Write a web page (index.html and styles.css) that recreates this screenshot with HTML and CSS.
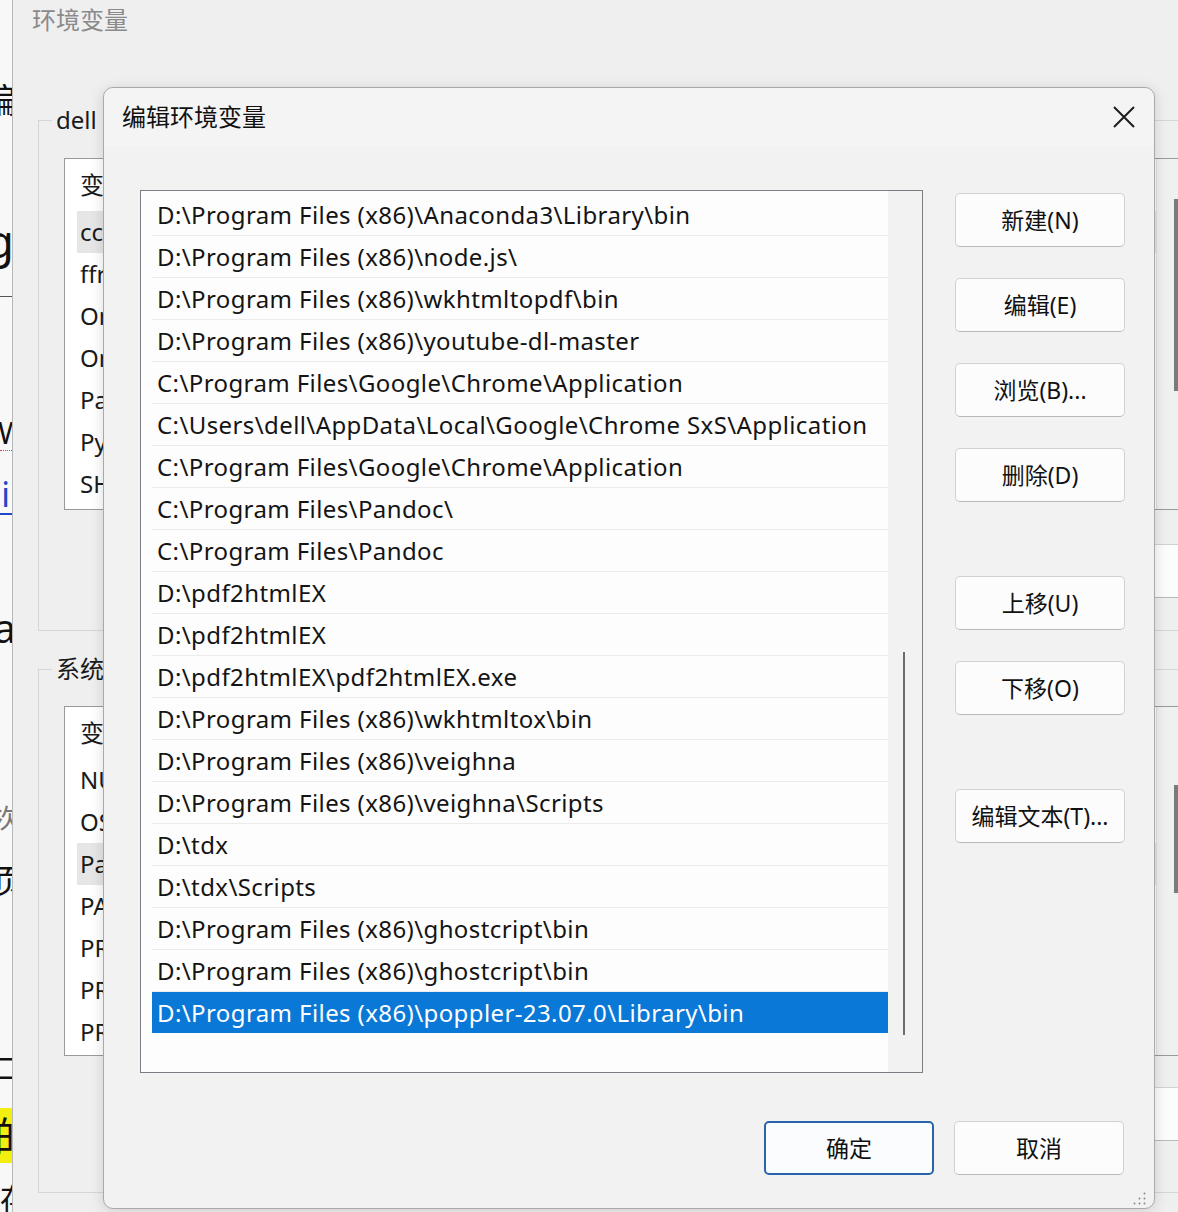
FILE: index.html
```html
<!DOCTYPE html>
<html lang="zh-CN">
<head>
  <meta charset="UTF-8">
  <title>编辑环境变量</title>
  <link rel="stylesheet" href="styles.css">
</head>
<body>
  <div class="doc">
    <div class="frag f-bian"><span>编</span></div>
    <div class="frag f-g"><span>g</span></div>
    <div class="doc-rule"></div>
    <div class="frag f-w"><span>W</span></div>
    <div class="frag f-i"><span>i</span></div>
    <div class="frag f-a"><span>a</span></div>
    <div class="frag f-ci"><span>次</span></div>
    <div class="frag f-ye"><span>页</span></div>
    <div class="frag f-er"><span>二</span></div>
    <div class="frag f-de"><span>的</span></div>
    <div class="frag f-cun"><span>存</span></div>
  </div>

  <div class="env-window">
    <div class="env-title">环境变量</div>

    <fieldset class="group group-user">
      <legend>dell 的用户变量(U)</legend>
      <div class="var-list list-user">
        <div class="var-body">
          <div class="var-head">变量</div>
          <div class="var-row active">cc</div>
          <div class="var-row">ffrun</div>
          <div class="var-row">OneDrive</div>
          <div class="var-row">OneDriveConsumer</div>
          <div class="var-row">Path</div>
          <div class="var-row">PyCharm</div>
          <div class="var-row">SHELL</div>
        </div>
        <div class="var-scroll"><div class="var-thumb thumb-user"></div></div>
      </div>
      <div class="group-buttons">
        <button class="btn">新建(N)...</button>
        <button class="btn">编辑(E)...</button>
        <button class="btn">删除(D)</button>
      </div>
    </fieldset>

    <fieldset class="group group-sys">
      <legend>系统变量(S)</legend>
      <div class="var-list list-sys">
        <div class="var-body">
          <div class="var-head">变量</div>
          <div class="var-row">NUMBER_OF_PROCESSORS</div>
          <div class="var-row">OS</div>
          <div class="var-row active">Path</div>
          <div class="var-row">PATHEXT</div>
          <div class="var-row">PROCESSOR_ARCHITECTURE</div>
          <div class="var-row">PROCESSOR_IDENTIFIER</div>
          <div class="var-row">PROCESSOR_LEVEL</div>
        </div>
        <div class="var-scroll"><div class="var-thumb thumb-sys"></div></div>
      </div>
      <div class="group-buttons sys-buttons">
        <button class="btn">新建(W)...</button>
        <button class="btn">编辑(I)...</button>
        <button class="btn">删除(L)</button>
      </div>
    </fieldset>
  </div>

  <div class="dialog">
    <div class="titlebar">
      <span class="dialog-title">编辑环境变量</span>
      <svg class="close" width="22" height="22" viewBox="0 0 22 22">
        <path d="M1 1 L21 21 M21 1 L1 21" stroke="#1c1c1c" stroke-width="2" fill="none"/>
      </svg>
    </div>

    <div class="dialog-body">
      <div class="path-list">
        <div class="path-rows">
          <div class="path-row">D:\Program Files (x86)\Anaconda3\Library\bin</div>
          <div class="path-row">D:\Program Files (x86)\node.js\</div>
          <div class="path-row">D:\Program Files (x86)\wkhtmltopdf\bin</div>
          <div class="path-row">D:\Program Files (x86)\youtube-dl-master</div>
          <div class="path-row">C:\Program Files\Google\Chrome\Application</div>
          <div class="path-row">C:\Users\dell\AppData\Local\Google\Chrome SxS\Application</div>
          <div class="path-row">C:\Program Files\Google\Chrome\Application</div>
          <div class="path-row">C:\Program Files\Pandoc\</div>
          <div class="path-row">C:\Program Files\Pandoc</div>
          <div class="path-row">D:\pdf2htmlEX</div>
          <div class="path-row">D:\pdf2htmlEX</div>
          <div class="path-row">D:\pdf2htmlEX\pdf2htmlEX.exe</div>
          <div class="path-row">D:\Program Files (x86)\wkhtmltox\bin</div>
          <div class="path-row">D:\Program Files (x86)\veighna</div>
          <div class="path-row">D:\Program Files (x86)\veighna\Scripts</div>
          <div class="path-row">D:\tdx</div>
          <div class="path-row">D:\tdx\Scripts</div>
          <div class="path-row">D:\Program Files (x86)\ghostcript\bin</div>
          <div class="path-row">D:\Program Files (x86)\ghostcript\bin</div>
          <div class="path-row selected">D:\Program Files (x86)\poppler-23.07.0\Library\bin</div>
        </div>
        <div class="path-scroll"><div class="path-thumb"></div></div>
      </div>

      <div class="side-buttons">
        <button class="btn">新建(N)</button>
        <button class="btn">编辑(E)</button>
        <button class="btn">浏览(B)...</button>
        <button class="btn">删除(D)</button>
        <button class="btn spaced">上移(U)</button>
        <button class="btn">下移(O)</button>
        <button class="btn spaced">编辑文本(T)...</button>
      </div>
    </div>

    <div class="dialog-footer">
      <button class="btn btn-default">确定</button>
      <button class="btn">取消</button>
    </div>

    <svg class="grip" width="14" height="14" viewBox="0 0 14 14">
      <circle cx="11.5" cy="2.5" r="1" fill="#8a8a8a"/>
      <circle cx="6.5" cy="7.5" r="1" fill="#8a8a8a"/>
      <circle cx="11.5" cy="7.5" r="1" fill="#8a8a8a"/>
      <circle cx="1.5" cy="12.5" r="1" fill="#8a8a8a"/>
      <circle cx="6.5" cy="12.5" r="1" fill="#8a8a8a"/>
      <circle cx="11.5" cy="12.5" r="1" fill="#8a8a8a"/>
    </svg>
  </div>
</body>
</html>
```

FILE: styles.css
```css
body {
  margin: 0;
  width: 1178px;
  height: 1212px;
  overflow: hidden;
  position: relative;
  background: #efefef;
  font-family: "Noto Sans", "Noto Sans CJK SC", sans-serif;
  color: #1a1a1a;
}

/* document peeking out on the left */
.doc {
  position: absolute;
  left: 0;
  top: 0;
  width: 12px;
  height: 1212px;
  background: #f8f8f8;
  overflow: hidden;
}
.frag {
  display: flex;
  justify-content: flex-end;
  white-space: nowrap;
  color: #111;
}
.f-bian { margin-top: 80px; height: 40px; line-height: 40px; font-size: 34px; }
.f-bian span { margin-right: -4px; }
.f-g { margin-top: 95px; height: 50px; line-height: 50px; font-size: 46px; }
.f-g span { margin-right: -2px; }
.doc-rule { margin-top: 31px; border-top: 1px solid #555; }
.f-w { margin-top: 118px; height: 35px; line-height: 35px; font-size: 30px; border-bottom: 1px dotted #e04040; }
.f-w span { margin-right: -14px; }
.f-i { margin-top: 25px; height: 37px; line-height: 37px; font-size: 34px; color: #2047c8; border-bottom: 2px solid #2047c8; }
.f-i span { margin-right: 2px; }
.f-a { margin-top: 93px; height: 40px; line-height: 40px; font-size: 40px; }
.f-a span { margin-right: -4px; }
.f-ci { margin-top: 155px; height: 30px; line-height: 30px; font-size: 26px; color: #777; }
.f-ci span { margin-right: -8px; }
.f-ye { margin-top: 28px; height: 40px; line-height: 40px; font-size: 34px; }
.f-ye span { margin-right: -14px; }
.f-er { margin-top: 152px; height: 30px; line-height: 30px; font-size: 30px; }
.f-er span { margin-right: -10px; }
.f-de { margin-top: 25px; height: 55px; line-height: 55px; font-size: 40px; background: #f2ee10; }
.f-de span { margin-right: -22px; }
.f-cun { margin-top: 20px; height: 32px; line-height: 32px; font-size: 30px; }
.f-cun span { margin-right: -18px; }

/* environment variables window behind */
.env-window {
  position: absolute;
  left: 12px;
  top: 0;
  width: 1240px;
  height: 1212px;
  box-sizing: border-box;
  border-left: 1px solid #b8b8b8;
  background: #efefef;
}
.env-title {
  height: 40px;
  line-height: 40px;
  padding-left: 19px;
  font-size: 24px;
  color: #8a8a8a;
}
.group {
  box-sizing: border-box;
  width: 1190px;
  margin: 0 0 0 25px;
  padding: 0;
  border: 1px solid #d6d6d6;
}
.group legend {
  margin-left: 13px;
  padding: 0 4px;
  font-size: 24px;
  line-height: 30px;
}
.group-user { margin-top: 65px; height: 526px; }
.group-sys { margin-top: 23px; height: 539px; }

.var-list {
  display: flex;
  width: 1136px;
  margin-left: 25px;
  box-sizing: border-box;
  border: 1px solid #9a9a9a;
  background: #fff;
  font-size: 24px;
}
.list-user { margin-top: 23px; height: 352px; }
.list-sys { margin-top: 22px; height: 350px; }
.var-body {
  flex: 1;
}
.var-head {
  height: 52px;
  line-height: 52px;
  padding-left: 15px;
}
.var-row {
  height: 42px;
  line-height: 42px;
  margin-left: 12px;
  padding-left: 3px;
}
.var-row.active {
  background: #e6e6e6;
}
.var-scroll {
  width: 42px;
  background: #f0f0f0;
  border-left: 1px solid #e0e0e0;
}
.var-thumb {
  width: 6px;
  margin-left: 17px;
  background: #7a7a7a;
}
.thumb-user { margin-top: 40px; height: 192px; }
.thumb-sys { margin-top: 78px; height: 108px; }

.group-buttons {
  display: flex;
  justify-content: flex-end;
  gap: 20px;
  margin-top: 34px;
  padding-right: 36px;
}
.sys-buttons { margin-top: 31px; }

/* edit dialog */
.dialog {
  position: absolute;
  left: 103px;
  top: 87px;
  width: 1052px;
  height: 1122px;
  box-sizing: border-box;
  border: 1px solid #a9a9a9;
  border-radius: 10px;
  background: #f2f2f2;
  box-shadow: 0 2px 14px rgba(0, 0, 0, 0.14);
}
.titlebar {
  height: 58px;
  box-sizing: border-box;
  display: flex;
  align-items: center;
  justify-content: space-between;
  padding: 0 19px 4px 18px;
  border-radius: 10px 10px 0 0;
  background: #f4f4f4;
}
.dialog-title {
  font-size: 24px;
  color: #111;
}
.close {
  margin-top: 4px;
}
.dialog-body {
  display: grid;
  grid-template-columns: 783px 170px;
  column-gap: 32px;
  padding: 44px 0 0 36px;
}

.path-list {
  height: 883px;
  box-sizing: border-box;
  display: flex;
  border: 1px solid #7c7c84;
  background: #fdfdfd;
}
.path-rows {
  flex: 1;
  margin: 3px 0 0 11px;
}
.path-row {
  height: 41px;
  line-height: 41px;
  padding-left: 5px;
  border-bottom: 1px solid #ebebeb;
  font-size: 24px;
  letter-spacing: 0.4px;
  white-space: nowrap;
  color: #141414;
}
.path-row.selected {
  background: #0a78d6;
  color: #fff;
  border-bottom-color: #fdfdfd;
}
.path-scroll {
  width: 34px;
  background: #f2f2f2;
}
.path-thumb {
  width: 2px;
  height: 383px;
  margin: 461px 0 0 15px;
  background: #6c6c6c;
}

.side-buttons {
  display: flex;
  flex-direction: column;
  gap: 31px;
  padding-top: 3px;
}
.side-buttons .spaced {
  margin-top: 43px;
}

.btn {
  width: 170px;
  height: 54px;
  box-sizing: border-box;
  padding: 0 0 2px;
  border: 1px solid #d2d2d2;
  border-bottom-color: #b9b9b9;
  border-radius: 5px;
  background: #fcfcfc;
  font-family: "Noto Sans", "Noto Sans CJK SC", sans-serif;
  font-size: 23px;
  color: #111;
  flex-shrink: 0;
}
.btn-default {
  border: 2px solid #2764ad;
  background: #fbfcfe;
}

.dialog-footer {
  display: flex;
  justify-content: flex-end;
  gap: 20px;
  padding: 48px 30px 0 0;
}

.grip {
  position: absolute;
  right: 7px;
  bottom: 3px;
}
```
